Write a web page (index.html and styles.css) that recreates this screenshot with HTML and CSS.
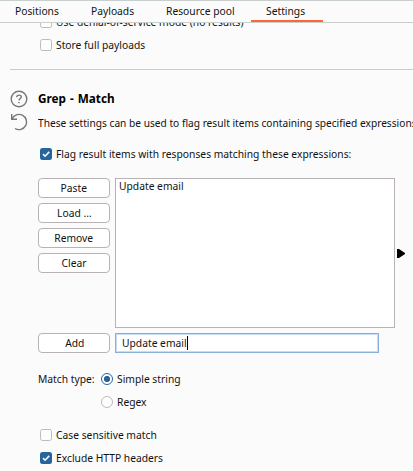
FILE: index.html
```
<!DOCTYPE html>
<html lang="en">
<head>
<meta charset="utf-8">
<title>Settings</title>
<link rel="stylesheet" href="styles.css">
</head>
<body>
<nav class="tabs">
  <div class="tab w1"><span class="t">Positions</span></div>
  <div class="tab w2"><span class="t">Payloads</span></div>
  <div class="tab w3"><span class="t">Resource pool</span></div>
  <div class="tab w4 active"><span class="t">Settings</span></div>
</nav>
<main>
  <div class="row clipped"><i class="box"></i><span class="t">Use denial-of-service mode (no results)</span></div>
  <div class="row store"><i class="box"></i><span class="t">Store full payloads</span></div>
  <hr>
  <section class="intro">
    <div class="icons">
      <svg width="18" height="18" viewBox="0 0 18 18"><circle cx="9" cy="9" r="7.8"/><path d="M6.7 7.3c0-1.4 1-2.2 2.3-2.2s2.3.8 2.3 2c0 1.6-2.3 1.6-2.3 3.3"/><path d="M9 11.9v1.3"/></svg>
      <svg width="18" height="18" viewBox="0 0 18 18"><path d="M1.7 1v5.3h5.3M2 6A7.6 7.6 0 1 1 5 15.5"/></svg>
    </div>
    <div class="copy">
      <h2><span class="t bold">Grep - Match</span></h2>
      <p><span class="t">These settings can be used to flag result items containing specified expressions.</span></p>
    </div>
  </section>
  <div class="row flag"><i class="box on"><svg width="12" height="12" viewBox="0 0 12 12"><path d="M3 6.1l2.1 2.1L9.2 3.9"/></svg></i><span class="t">Flag result items with responses matching these expressions:</span></div>
  <section class="editor">
    <div class="buttons">
      <button><span class="t">Paste</span></button>
      <button><span class="t">Load ...</span></button>
      <button><span class="t">Remove</span></button>
      <button><span class="t">Clear</span></button>
    </div>
    <div class="list"><span class="t">Update email</span></div>
    <svg class="arrow" width="8" height="9" viewBox="0 0 8 9"><path d="M0 0h2l6 4v1l-6 4H0z"/></svg>
  </section>
  <section class="add">
    <button><span class="t">Add</span></button>
    <div class="field"><span class="t">Update email</span><i class="caret"></i></div>
  </section>
  <section class="match">
    <div class="label"><span class="t">Match type:</span></div>
    <div>
      <div class="radio-row"><i class="radio on"></i><span class="t">Simple string</span></div>
      <div class="radio-row"><i class="radio"></i><span class="t">Regex</span></div>
    </div>
  </section>
  <div class="row case"><i class="box"></i><span class="t">Case sensitive match</span></div>
  <div class="row"><i class="box on"><svg width="12" height="12" viewBox="0 0 12 12"><path d="M3 6.1l2.1 2.1L9.2 3.9"/></svg></i><span class="t">Exclude HTTP headers</span></div>
</main>
</body>
</html>
```
FILE: styles.css
```
* { box-sizing: border-box; }
body {
  margin: 0;
  width: 413px;
  height: 471px;
  overflow: hidden;
  display: flex;
  flex-direction: column;
  background: #fbfbfb;
  color: #111;
  font: 11.5px/20px "Noto Sans", sans-serif;
}
.t {
  display: inline-block;
  white-space: nowrap;
  transform: scaleX(.894);
  transform-origin: 0 50%;
}
.t.bold { transform: scaleX(.94); color: #000; word-spacing: 1px; }
.tabs {
  flex: none;
  display: flex;
  height: 23px;
  border-top: 1px solid #c8cfcd;
  border-bottom: 1px solid #c8cfcd;
}
.tab { height: 21px; padding-left: 15px; line-height: 20px; }
.w1 { width: 76px; }
.w2 { width: 75px; }
.w3 { width: 100px; }
.w4 { width: 72px; }
.active { border-bottom: 2px solid #ff6633; }
main { flex: 1; min-height: 0; overflow: hidden; }
.row { display: flex; align-items: center; gap: 4px; height: 20px; margin: 0 0 3px 40px; }
.clipped { margin-top: -11px; }
.store { margin-bottom: 0; }
.box {
  flex: none;
  width: 12px;
  height: 12px;
  border: 1px solid #bcbcbc;
  border-radius: 2.5px;
  background: #fdfdfd;
}
.box.on { border: 0; background: #26659c; }
.box svg { display: block; fill: none; stroke: #fff; stroke-width: 1.6; }
hr { height: 1px; border: 0; margin: 14px 0 0 10px; background: #c8cccc; }
.intro { display: flex; padding-left: 10px; margin-top: 19px; }
.icons { flex: none; width: 28px; display: flex; flex-direction: column; gap: 5px; padding-top: 1px; }
.icons svg { fill: none; stroke: #777; stroke-width: 1.4; }
.copy { height: 44px; }
h2 { margin: 0; height: 20px; font-size: 12.5px; line-height: 19px; }
p { margin: 4px 0 0; height: 20px; }
p .t { transform: scaleX(.884); }
.flag { margin-top: 11px; margin-bottom: 0; }
.editor { display: flex; padding-left: 38px; margin-top: 14px; }
.buttons { flex: none; display: flex; flex-direction: column; gap: 5px; width: 72px; margin-right: 5px; }
button {
  width: 72px;
  height: 20px;
  padding: 0;
  flex: none;
  border: 1px solid #b9b2b4;
  border-radius: 4px;
  background: #fff;
  color: #111;
  font: inherit;
  line-height: 18px;
}
button .t { transform-origin: 50% 50%; }
.add button { padding-left: 1px; }
.list {
  flex: none;
  width: 280px;
  height: 150px;
  padding-left: 3px;
  border: 1px solid #b9b2b4;
  background: #fff;
  line-height: 14px;
}
.arrow { flex: none; margin: 71px 0 0 2px; }
.add { display: flex; gap: 5px; padding-left: 38px; margin-top: 5px; }
.field {
  display: flex;
  align-items: center;
  width: 264px;
  height: 20px;
  padding-left: 6px;
  border: 1px solid #87afda;
  box-shadow: inset 0 0 0 1px #c6def5;
  background: #fff;
}
.caret { width: 1px; height: 14px; margin-left: -7px; background: #000; }
.match { display: flex; padding-left: 38px; margin-top: 16px; }
.label { width: 63px; }
.radio-row { display: flex; align-items: center; gap: 4px; height: 20px; margin-bottom: 3px; }
.radio { width: 12px; height: 12px; border: 1px solid #bcbcbc; border-radius: 50%; background: #fdfdfd; }
.radio.on { border-color: #26659c; background: radial-gradient(circle, #26659c 0 2.8px, #fff 3.4px); }
.case { margin-top: 10px; }
```
